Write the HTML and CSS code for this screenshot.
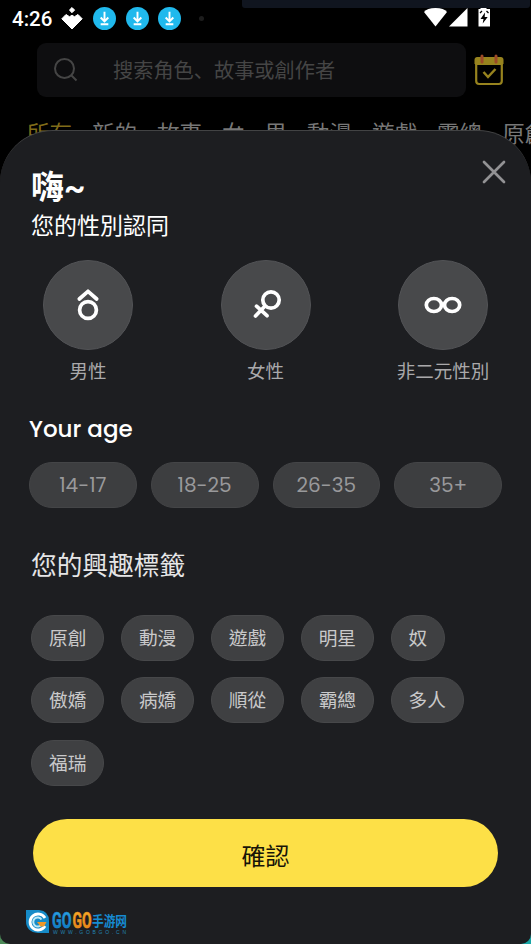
FILE: index.html
```
<!DOCTYPE html>
<html lang="zh-Hant">
<head>
<meta charset="utf-8">
<title>Profile setup</title>
<link rel="stylesheet" href="styles.css">
</head>
<body>
<div class="screen">
  <div class="notch"></div>
  <header class="status">
    <span class="time">4:26</span>
    <svg class="app-mark" width="22" height="23" viewBox="0 0 22 23" fill="#fff" stroke="#fff" stroke-width="1" stroke-linejoin="round"><path d="M11 .5l2.600 2.600L11 5.700 8.400 3.100z M11 22L.8 11.800 5 7.500l3.500 2.200L11 8.300l2.500 1.400L17 7.500l4.200 4.300z"/></svg>
    <svg class="download" viewBox="0 0 24 24"><circle cx="12" cy="12" r="12"/><path d="M12 5v10M8 11l4 4 4-4M8 18h8"/></svg>
    <svg class="download" viewBox="0 0 24 24"><circle cx="12" cy="12" r="12"/><path d="M12 5v10M8 11l4 4 4-4M8 18h8"/></svg>
    <svg class="download" viewBox="0 0 24 24"><circle cx="12" cy="12" r="12"/><path d="M12 5v10M8 11l4 4 4-4M8 18h8"/></svg>
    <i class="more"></i>
    <svg class="signals" width="67" height="20" viewBox="0 0 67 20" fill="#fff"><path d="M0 4Q3 0 11.500 0T23 4L11.500 18.500z"/><path d="M43.500 0v18.500H25z"/><path d="M54.500 1h2V0h6v1h3.500v17.500H54.500z"/><path d="M61 4.500l-4.500 6.500h3l-.8 4.500 5-6.500h-3z" fill="#000"/><path d="M56 5l2-2M64.500 5l-2-2" stroke="#000" stroke-width="1.300"/></svg>
  </header>
  <div class="search-row">
    <div class="search">
      <svg width="24" height="24" viewBox="0 0 24 24"><circle cx="10.500" cy="10.500" r="9.500"/><path d="M17 17l5.500 5.500"/></svg>
      <span lang="zh-Hans">搜索角色、故事或創作者</span>
    </div>
    <svg class="calendar" width="30" height="32" viewBox="0 0 30 32"><rect x="2.200" y="4" width="25.600" height="26" rx="3"/><path class="band" d="M.5 6q0-3 3-3h23q3 0 3 3v3.500l-1.500 1.500H2L.5 9.500z"/><path class="pins" d="M8 2v6M22 2v6"/><path class="check" d="M9.500 18l4.500 5 7.500-8"/></svg>
  </div>
  <nav class="tabs"><span class="current">所有</span><span>新的</span><span>故事</span><span>女</span><span>男</span><span>動漫</span><span>遊戲</span><span>霸總</span><span>原創</span></nav>
  <main class="sheet">
    <div class="sheet-head">
      <h1>嗨~</h1>
      <svg class="close" width="24" height="24" viewBox="0 0 24 24"><path d="M2 2l20 20M22 2L2 22"/></svg>
    </div>
    <h2>您的性別認同</h2>
    <div class="genders">
      <div class="gender"><span class="disc"><svg width="40" height="40" viewBox="0 0 40 40"><path d="M11.300 14L20 6.300l8.700 7.700"/><circle cx="20" cy="25" r="8.400"/></svg></span><span>男性</span></div>
      <div class="gender"><span class="disc"><svg width="40" height="40" viewBox="0 0 40 40"><circle cx="25" cy="15" r="8.200"/><path d="M18.800 21.200L9.500 31M10.500 21.200l10.500 9.500"/></svg></span><span>女性</span></div>
      <div class="gender"><span class="disc"><svg width="40" height="40" viewBox="0 0 40 40"><ellipse cx="10.900" cy="20" rx="7.600" ry="6.500"/><ellipse cx="29.100" cy="20" rx="7.600" ry="6.500"/></svg></span><span>非二元性別</span></div>
    </div>
    <h3 class="age-title">Your age</h3>
    <div class="ages"><span>14-17</span><span>18-25</span><span>26-35</span><span>35+</span></div>
    <h3 class="interest-title">您的興趣標籤</h3>
    <div class="tags"><span>原創</span><span>動漫</span><span>遊戲</span><span>明星</span><span>奴</span><span>傲嬌</span><span>病嬌</span><span>順從</span><span>霸總</span><span>多人</span><span>福瑞</span></div>
    <button class="confirm">確認</button>
    <footer class="brand">
      <svg class="brand-mark" width="24" height="24" viewBox="0 0 24 24"><path d="M0 0h13q10 1 10 11v12H12Q0 22 0 11z" fill="#168bc8"/><path d="M19 8a8 8 0 1 0 0 8" fill="none" stroke="#fff" stroke-width="2.800"/><path d="M15.500 9.500a4.500 4.500 0 1 0 0 5" fill="none" stroke="#bce9f7" stroke-width="2"/><path d="M11 12h9.500l-2.500 4.500h-3.500z" fill="#ef9828"/></svg>
      <svg class="brand-copy" width="76" height="25" viewBox="0 0 76 25">
        <defs>
          <linearGradient id="blue" x2="0" y2="1"><stop stop-color="#35a9e6"/><stop offset="1" stop-color="#0871bb"/></linearGradient>
          <linearGradient id="gold" x2="0" y2="1"><stop stop-color="#f9b32b"/><stop offset="1" stop-color="#e57b16"/></linearGradient>
        </defs>
        <text class="latin blue" x="0" y="17.500" textLength="19.500" lengthAdjust="spacingAndGlyphs">GO</text>
        <text class="latin gold" x="20.500" y="17.500" textLength="19" lengthAdjust="spacingAndGlyphs">GO</text>
        <text class="cjk" x="40" y="15.500" textLength="35" lengthAdjust="spacingAndGlyphs">手游网</text>
        <text class="url" x="1" y="24" textLength="73">WWW.GOBGO.CN</text>
      </svg>
    </footer>
  </main>
</div>
</body>
</html>
```
FILE: styles.css
```
* { box-sizing: border-box; }
body { margin: 0; background: #000; font-family: Roboto, "Noto Sans CJK TC", sans-serif; }
.screen { position: relative; width: 531px; height: 944px; overflow: hidden; background: linear-gradient(90deg, #4c8a58 50%, #18a5a5 50%) bottom / 100% 12px no-repeat #000; }
.notch { position: absolute; top: 0; left: 242px; width: 288px; height: 8px; background: #10151f; border-radius: 0 0 3px 3px; }
.status { display: flex; align-items: center; height: 37px; padding-left: 12px; }
.time { width: 49px; color: #fff; font-size: 20.500px; font-weight: 500; }
.app-mark { margin-right: 10px; }
.download { width: 23px; height: 23px; margin-right: 9.500px; fill: #20b9ed; }
.download path { fill: none; stroke: #fff; stroke-width: 2; }
.more { width: 5px; height: 5px; margin-left: 8px; border-radius: 50%; background: #1d1d1d; }
.signals { margin-left: 220px; margin-top: -1px; }
.search-row { display: flex; align-items: center; height: 65px; padding-left: 37px; }
.search { display: flex; align-items: center; width: 429px; height: 54px; padding-left: 17px; border-radius: 9px; background: #0e0e10; color: #454545; font-family: "Noto Sans CJK SC", sans-serif; font-size: 20.200px; }
.search svg { margin-right: 35px; fill: none; stroke: #454545; stroke-width: 2; }
.calendar { margin-left: 8px; fill: none; stroke: #97831e; stroke-width: 2.200; }
.calendar .band { fill: #97831e; stroke: none; }
.calendar .pins { stroke: #9c4927; stroke-width: 3; stroke-linecap: round; }
.calendar .check { stroke-width: 2.500; }
.tabs { display: flex; gap: 20px; height: 28px; padding-left: 27px; padding-top: 16px; color: #777; font-size: 22.500px; line-height: 32px; white-space: nowrap; }
.tabs .current { color: #806c19; }
.sheet { position: relative; height: 814px; padding: 35px 29px 0; border-top: 1px solid #424344; border-radius: 53px 53px 10px 10px; background: #1d1e21; color: #fff; }
h1, h2, h3 { margin: 0; font-weight: 400; }
.sheet-head { display: flex; justify-content: space-between; height: 43px; padding-left: 2px; }
h1 { font-size: 33px; font-weight: 700; line-height: 43px; }
.close { margin: -6px -4px 0 0; stroke: #929294; stroke-width: 2.700; stroke-linecap: round; }
h2 { height: 34px; padding-left: 2px; font-size: 23px; line-height: 36px; }
.genders { display: flex; justify-content: space-between; height: 152px; padding-top: 17px; }
.gender { display: flex; flex-direction: column; align-items: center; width: 118px; color: #aaa9ab; font-size: 18.500px; line-height: 45px; }
.disc { display: grid; place-items: center; flex: none; width: 90px; height: 90px; border: 1px solid #525356; border-radius: 50%; background: #48494b; }
.disc svg { fill: none; stroke: #fff; stroke-width: 3.700; stroke-linecap: round; stroke-linejoin: round; }
.age-title { height: 67px; font: 500 23px/68px Poppins, Inter, sans-serif; }
.ages { display: flex; gap: 14px; }
.ages span { display: grid; place-items: center; width: 108px; height: 46px; border: 1px solid #444547; border-radius: 23px; background: #3d3e40; color: #99999b; font: 400 20px Poppins, Inter, sans-serif; }
.interest-title { height: 107px; padding: 4px 2px 0; color: #e5e5e6; font-size: 25.700px; line-height: 108px; }
.tags { display: flex; flex-wrap: wrap; gap: 16.300px 16.500px; width: 455px; padding-left: 2px; }
.tags span { height: 46px; padding: 0 17px; border: 1px solid #47484a; border-radius: 23px; background: #3f4042; color: #c9c9ca; font-size: 18.700px; line-height: 46px; }
.confirm { display: block; width: 465px; height: 68px; margin: 33.800px 0 0 4px; padding: 2px 0 0; border: 0; border-radius: 34px; background: #fde047; color: #171408; font: 400 24px "Noto Sans CJK TC", sans-serif; }
.brand { display: flex; gap: 2px; height: 25px; margin: 22.600px 0 0 -3px; }
.brand svg { flex: none; overflow: visible; }
.latin { font: 700 22px Roboto, sans-serif; stroke-width: .6; }
.blue { fill: url(#blue); stroke: #168bd2; }
.gold { fill: url(#gold); stroke: #ed931d; }
.cjk { fill: #168bd2; font: 700 14px "Noto Sans CJK SC", sans-serif; }
.url { fill: #2384b3; font: 5px "Liberation Sans", sans-serif; }
```
